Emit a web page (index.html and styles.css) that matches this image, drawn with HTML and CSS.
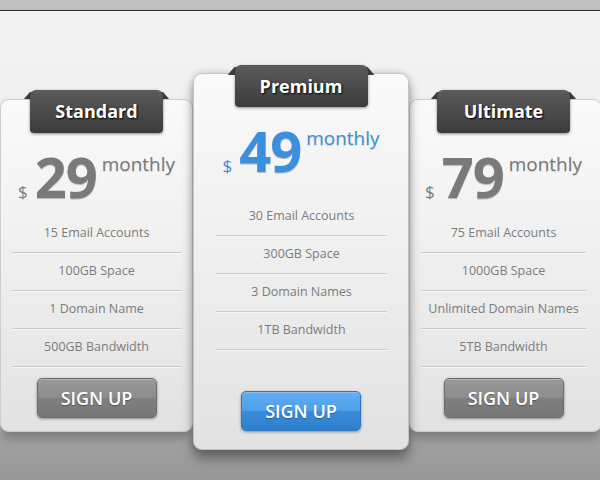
FILE: index.html
```html
<!DOCTYPE html>
<html>
<head>
	<title>Pricing Table</title>
	<meta charset="utf-8">
	<link rel="stylesheet" href="styles.css">
</head>
<body>
	<div class="top_bar"></div>
	<!--pricing start-->
	<div id="pricing">
		<div class="plan">
			<div class="p_tab">Standard</div>
			<div class="p_price"><span class="cur">$</span><span class="amt">29</span><span class="per">monthly</span></div>
			<ul class="p_list">
				<li>15 Email Accounts</li>
				<li>100GB Space</li>
				<li>1 Domain Name</li>
				<li>500GB Bandwidth</li>
			</ul>
			<a class="p_btn" href="#">SIGN UP</a>
		</div>
		<div class="plan featured">
			<div class="p_tab">Premium</div>
			<div class="p_price"><span class="cur">$</span><span class="amt">49</span><span class="per">monthly</span></div>
			<ul class="p_list">
				<li>30 Email Accounts</li>
				<li>300GB Space</li>
				<li>3 Domain Names</li>
				<li>1TB Bandwidth</li>
			</ul>
			<a class="p_btn" href="#">SIGN UP</a>
		</div>
		<div class="plan last">
			<div class="p_tab">Ultimate</div>
			<div class="p_price"><span class="cur">$</span><span class="amt">79</span><span class="per">monthly</span></div>
			<ul class="p_list">
				<li>75 Email Accounts</li>
				<li>1000GB Space</li>
				<li>Unlimited Domain Names</li>
				<li>5TB Bandwidth</li>
			</ul>
			<a class="p_btn" href="#">SIGN UP</a>
		</div>
	</div>
	<!--end pricing-->
</body>
</html>
```

FILE: styles.css
```css
*{margin:0;padding:0;box-sizing:border-box;}
html,body{height:100%;overflow:hidden;}
body{font-family:"Open Sans","Liberation Sans",sans-serif;background:linear-gradient(#f3f3f3 11px,#ececec 250px,#dedede 410px,#b4b4b4 428px,#a0a0a0 440px,#989898 480px);}
.top_bar{height:11px;background:#bfbfbf;border-bottom:1px solid #2e2e2e;}
/*pricing start*/
#pricing{display:flex;align-items:flex-start;width:602px;}
#pricing .plan{position:relative;flex:none;width:193px;margin-top:88px;padding-bottom:13px;background:linear-gradient(#fafafa,#f1f1f1 40%,#e2e2e2);border:1px solid #cdcdcd;border-radius:9px;box-shadow:0 6px 9px rgba(0,0,0,.28);text-align:center;}
#pricing .plan.featured{z-index:2;width:216px;margin-top:62px;padding-bottom:18px;border-color:#c4c4c4;box-shadow:0 0 7px rgba(0,0,0,.18),0 9px 12px rgba(0,0,0,.35);}
#pricing .plan.last{padding-right:4px;}
#pricing .p_tab{position:relative;width:133px;height:43px;margin:-10px auto 0;background:linear-gradient(#5b5b5b,#3b3b3b);border-radius:6px 6px 4px 4px;box-shadow:0 1px 3px rgba(0,0,0,.45);color:#fff;font-size:18px;font-weight:700;line-height:43px;text-shadow:1px 1px 2px #000;}
#pricing .featured .p_tab{margin-top:-9px;height:42px;line-height:42px;}
#pricing .p_tab:before{content:"";position:absolute;z-index:-1;left:-7px;right:-7px;top:2px;height:8px;background:#3f3f3f;clip-path:polygon(7px 0,calc(100% - 7px) 0,100% 100%,0 100%);}
#pricing .p_price{padding:15px 0 11px;height:82px;color:#7a7a7a;white-space:nowrap;}
#pricing .featured .p_price{height:91px;color:#3b8fdb;}
#pricing .p_price .cur{font-size:17px;margin-right:7px;}
#pricing .p_price .amt{font-size:56px;font-weight:700;line-height:56px;letter-spacing:-1px;text-shadow:0 1px 1px rgba(0,0,0,.25);}
#pricing .p_price .per{font-size:19px;margin-left:5px;vertical-align:27px;text-shadow:0 1px 1px rgba(0,0,0,.15);}
#pricing .p_list{list-style:none;margin:0 11px;}
#pricing .featured .p_list{margin:0 21px 0 22px;}
#pricing .p_list li{height:38px;line-height:36px;border-bottom:1px solid #c9c9c9;box-shadow:0 1px 0 #f7f7f7;color:#7c7c7c;font-size:12.5px;}
#pricing .p_btn{display:block;width:120px;height:40px;margin:11px auto 0;background:linear-gradient(#9a9a9a,#8c8c8c 50%,#7f7f7f 51%,#777);border:1px solid #6d6d6d;border-radius:5px;box-shadow:0 1px 3px rgba(0,0,0,.4),inset 0 1px 0 rgba(255,255,255,.25);color:#fff;font-size:18px;font-weight:600;line-height:38px;text-decoration:none;text-shadow:0 1px 1px rgba(0,0,0,.35);}
#pricing .featured .p_btn{margin-top:41px;background:linear-gradient(#62aef2,#4d9fe8 50%,#3a8ddb 51%,#2c7ecb);border-color:#2f78bd;}
/*end pricing*/
```
